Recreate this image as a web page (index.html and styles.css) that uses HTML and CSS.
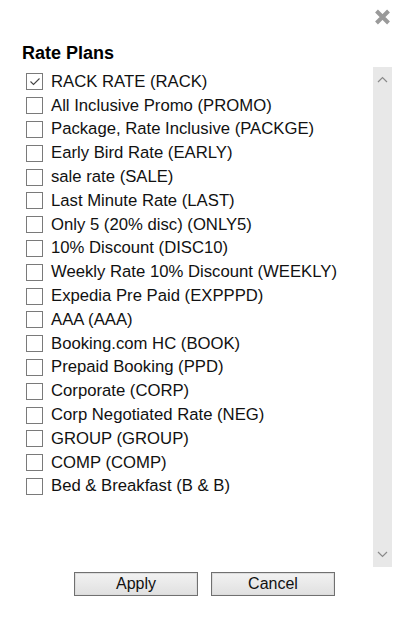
FILE: index.html
```html
<!DOCTYPE html>
<html>
<head>
<meta charset="utf-8">
<link rel="stylesheet" href="styles.css">
</head>
<body>
<div class="dialog">
  <div class="topbar">
    <span class="close" aria-label="close">
      <svg width="17" height="16" viewBox="0 0 17 16"><path d="M2.5 2 L14.5 14 M14.5 2 L2.5 14" stroke="#9a9a9a" stroke-width="4" stroke-linecap="butt"/></svg>
    </span>
  </div>
  <h2 class="title">Rate Plans</h2>
  <div class="listbox">
    <ul class="items">
      <li class="item"><span class="cb checked"><svg width="12" height="10" viewBox="0 0 12 10"><path d="M1.5 4.5 L4.5 7.5 L10.5 1.5" fill="none" stroke="#444" stroke-width="1.1"/></svg></span>RACK RATE (RACK)</li>
      <li class="item"><span class="cb"></span>All Inclusive Promo (PROMO)</li>
      <li class="item"><span class="cb"></span>Package, Rate Inclusive (PACKGE)</li>
      <li class="item"><span class="cb"></span>Early Bird Rate (EARLY)</li>
      <li class="item"><span class="cb"></span>sale rate (SALE)</li>
      <li class="item"><span class="cb"></span>Last Minute Rate (LAST)</li>
      <li class="item"><span class="cb"></span>Only 5 (20% disc) (ONLY5)</li>
      <li class="item"><span class="cb"></span>10% Discount (DISC10)</li>
      <li class="item"><span class="cb"></span>Weekly Rate 10% Discount (WEEKLY)</li>
      <li class="item"><span class="cb"></span>Expedia Pre Paid (EXPPPD)</li>
      <li class="item"><span class="cb"></span>AAA (AAA)</li>
      <li class="item"><span class="cb"></span>Booking.com HC (BOOK)</li>
      <li class="item"><span class="cb"></span>Prepaid Booking (PPD)</li>
      <li class="item"><span class="cb"></span>Corporate (CORP)</li>
      <li class="item"><span class="cb"></span>Corp Negotiated Rate (NEG)</li>
      <li class="item"><span class="cb"></span>GROUP (GROUP)</li>
      <li class="item"><span class="cb"></span>COMP (COMP)</li>
      <li class="item"><span class="cb"></span>Bed &amp; Breakfast (B &amp; B)</li>
    </ul>
    <div class="scrollbar">
      <svg class="arrow" width="11" height="7" viewBox="0 0 11 7"><path d="M1 6 L5.5 1.5 L10 6" fill="none" stroke="#8a8a8a" stroke-width="1.2"/></svg>
      <svg class="arrow" width="11" height="7" viewBox="0 0 11 7"><path d="M1 1 L5.5 5.5 L10 1" fill="none" stroke="#8a8a8a" stroke-width="1.2"/></svg>
    </div>
  </div>
  <div class="actions">
    <button class="btn">Apply</button>
    <button class="btn">Cancel</button>
  </div>
</div>
</body>
</html>
```

FILE: styles.css
```css
html, body {
  margin: 0;
  padding: 0;
  background: #fff;
}
body {
  font-family: "Liberation Sans", Arial, sans-serif;
  color: #111;
  width: 414px;
  height: 619px;
  overflow: hidden;
}
.dialog {
  padding: 0 22px 0 22px;
}
.topbar {
  height: 39px;
  display: flex;
  justify-content: flex-end;
  align-items: flex-start;
  padding-top: 9px;
  box-sizing: border-box;
}
.close {
  display: block;
  width: 17px;
  height: 16px;
  margin-right: 1px;
}
.close svg { display: block; }
.title {
  margin: 0;
  font-size: 18px;
  font-weight: bold;
  line-height: 28px;
  height: 28px;
  color: #000;
}
.listbox {
  display: flex;
  height: 500px;
}
.items {
  list-style: none;
  margin: 0;
  padding: 3px 0 0 4px;
  flex: 1;
}
.item {
  display: flex;
  align-items: center;
  height: 23.8px;
  font-size: 16.7px;
  white-space: nowrap;
}
.cb {
  width: 15px;
  height: 15px;
  border: 1px solid #7a7a7a;
  background: #fff;
  margin-right: 8px;
  display: flex;
  align-items: center;
  justify-content: center;
  flex-shrink: 0;
}
.cb svg { display: block; }
.scrollbar {
  width: 19px;
  background: #e8e8e8;
  display: flex;
  flex-direction: column;
  justify-content: space-between;
  align-items: center;
  padding: 9px 0 9px 0;
  box-sizing: border-box;
}
.arrow { display: block; }
.actions {
  display: flex;
  justify-content: center;
  gap: 13px;
  padding-top: 5px;
  padding-right: 5px;
}
.btn {
  width: 124px;
  height: 24px;
  font-family: "Liberation Sans", Arial, sans-serif;
  font-size: 16px;
  color: #111;
  border: 1px solid #707070;
  box-shadow: inset 0 0 0 1px #dcdcdc;
  background: linear-gradient(#f2f2f2, #e0e0e0);
  padding: 0;
  border-radius: 0;
}
```
